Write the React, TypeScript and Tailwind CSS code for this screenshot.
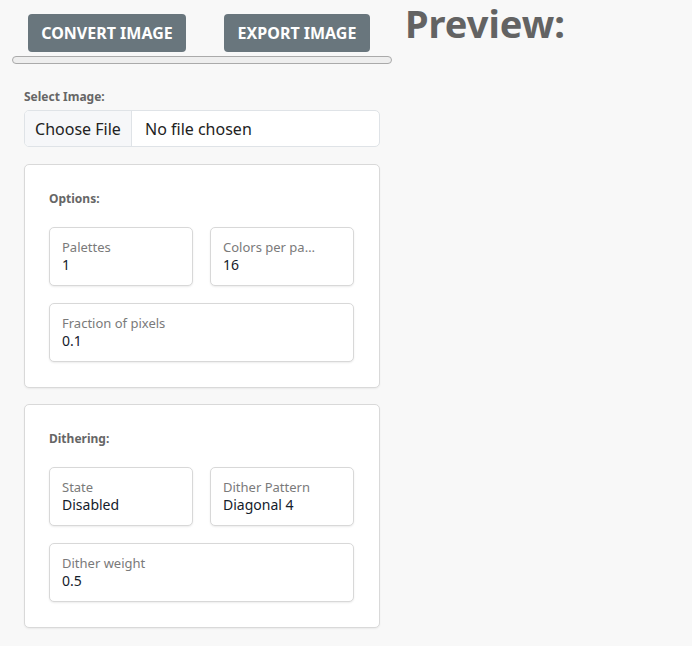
import React from 'react';

const font = { fontFamily: '"Noto Sans", "Open Sans", sans-serif' };

function Field({ label, value, wide, labelWidth }: { label: string; value: string; wide?: boolean; labelWidth?: string }) {
  return (
    <div
      className={`h-[59px] rounded-[5px] border border-[#d8d8d8] bg-white px-[12px] pt-[10px] shadow-[0_1px_2px_rgba(0,0,0,0.08)] ${
        wide ? 'col-span-2' : ''
      }`}
    >
      <div className={`truncate text-[13px] leading-[18px] text-[#7a7a7a] ${labelWidth ?? ''}`}>{label}</div>
      <div className="text-[14px] leading-[18px] text-[#14202b]">{value}</div>
    </div>
  );
}

function Card({ title, children }: { title: string; children: React.ReactNode }) {
  return (
    <div className="rounded-[5px] border border-[#d9d9d9] bg-white pt-[25px] pr-[25px] pb-[25px] pl-[24px] shadow-[0_1px_2px_rgba(0,0,0,0.06)]">
      <div className="mb-[20px] text-[12px] font-bold leading-[17px] text-[#666]">{title}</div>
      <div className="grid grid-cols-2 gap-[17px]">{children}</div>
    </div>
  );
}

export default function App() {
  return (
    <div className="flex min-h-[646px] bg-[#f8f8f8]" style={font}>
      <div className="ml-[12px] w-[380px] pt-[14px]">
        <div className="flex gap-[38px] pl-[16px]">
          <button className="h-[38px] w-[158px] rounded-[4px] bg-[#69767d] text-[16px] font-bold text-white">
            CONVERT IMAGE
          </button>
          <button className="h-[38px] w-[146px] rounded-[4px] bg-[#69767d] text-[16px] font-bold text-white">
            EXPORT IMAGE
          </button>
        </div>
        <div className="mt-[4px] h-[8px] rounded-full border border-[#aaa] bg-[#eee]" />
        <div className="ml-[12px] w-[356px]">
          <div className="mt-[24px] text-[12px] font-bold leading-[17px] text-[#666]">Select Image:</div>
          <div className="mt-[5px] flex h-[37px] items-stretch overflow-hidden rounded-[5px] border border-[#dfe3e7] bg-white text-[16px] text-[#222]">
            <div className="flex w-[107px] items-center justify-center border-r border-[#dfe3e7] bg-[#f6f7f9]">
              Choose File
            </div>
            <div className="flex items-center pl-[13px]">No file chosen</div>
          </div>
          <div className="mt-[17px] flex flex-col gap-[16px]">
            <Card title="Options:">
              <Field label="Palettes" value="1" />
              <Field label="Colors per palette" value="16" labelWidth="max-w-[94px]" />
              <Field label="Fraction of pixels" value="0.1" wide />
            </Card>
            <Card title="Dithering:">
              <Field label="State" value="Disabled" />
              <Field label="Dither Pattern" value="Diagonal 4" />
              <Field label="Dither weight" value="0.5" wide />
            </Card>
          </div>
        </div>
      </div>
      <div className="ml-[13px] pt-[1px]">
        <h1 className="whitespace-nowrap text-[38px] font-bold leading-[44px] text-[#636363]">Preview:</h1>
      </div>
    </div>
  );
}
